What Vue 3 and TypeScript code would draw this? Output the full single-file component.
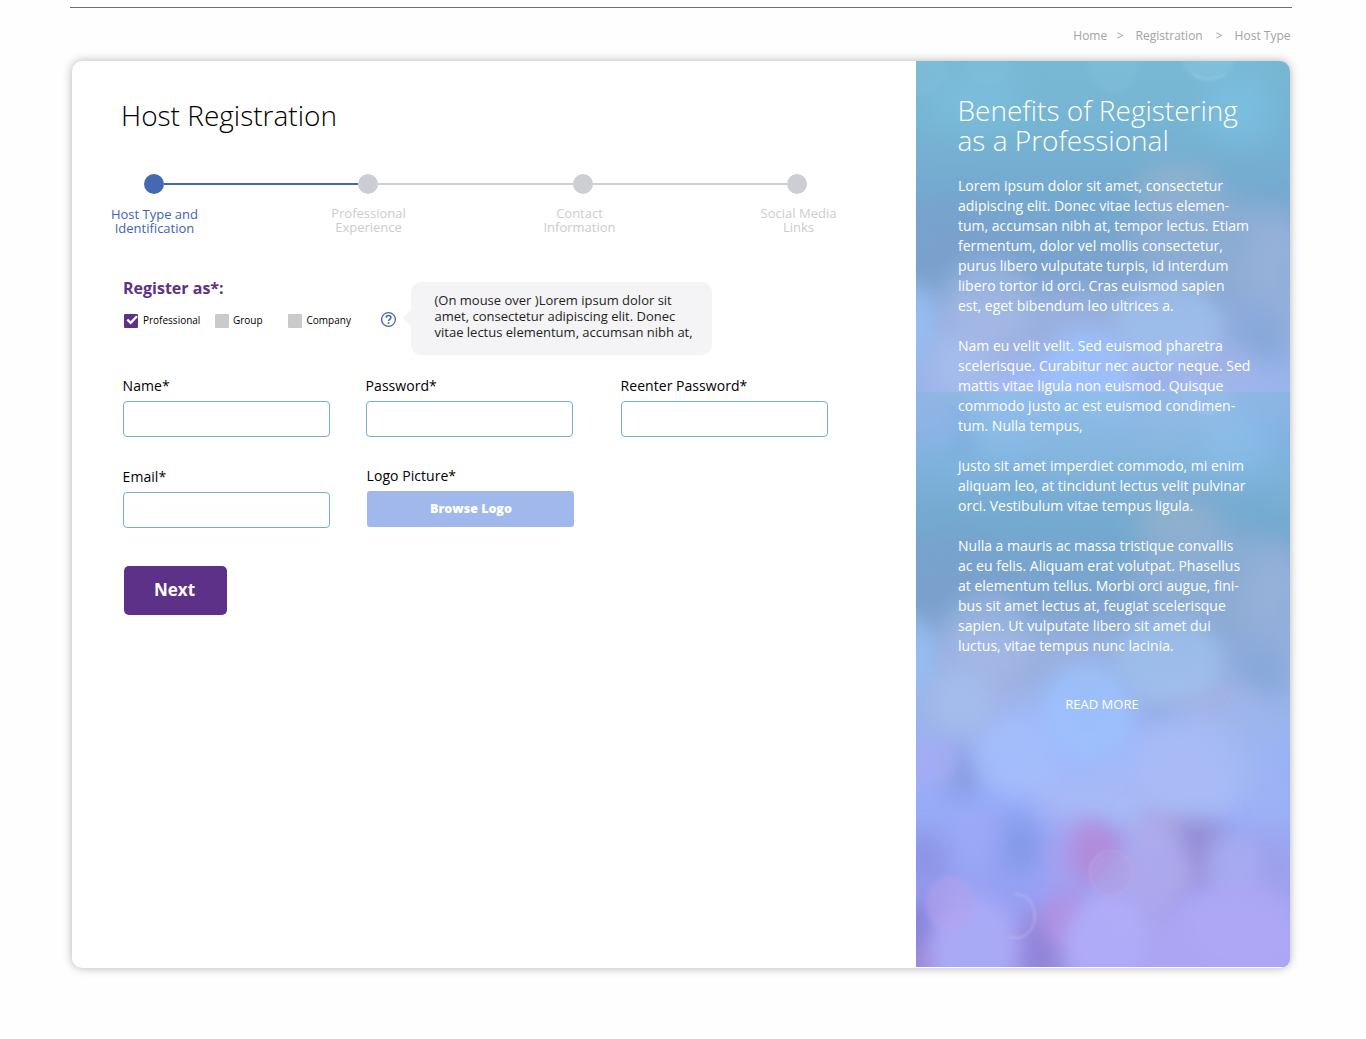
<script setup lang="ts">
import { ref } from 'vue'

interface Step {
  text: string
  active: boolean
}

interface Blob {
  x: number
  y: number
  rx: number
  ry: number
  fill: string
  o: number
}

const steps: Step[] = [
  { text: 'Host Type and\nIdentification', active: true },
  { text: 'Professional\nExperience', active: false },
  { text: 'Contact\nInformation', active: false },
  { text: 'Social Media\nLinks', active: false },
]

const hostTypes = ['Professional', 'Group', 'Company']
const selected = ref('Professional')

const heading = 'Benefits of Registering\nas a Professional'

const tip = [
  '(On mouse over )Lorem ipsum dolor sit',
  'amet, consectetur adipiscing elit. Donec',
  'vitae lectus elementum, accumsan nibh at,',
].join('\n')

const benefits: string[][] = [
  [
    'Lorem ipsum dolor sit amet, consectetur',
    'adipiscing elit. Donec vitae lectus elemen-',
    'tum, accumsan nibh at, tempor lectus. Etiam',
    'fermentum, dolor vel mollis consectetur,',
    'purus libero vulputate turpis, id interdum',
    'libero tortor id orci. Cras euismod sapien',
    'est, eget bibendum leo ultrices a.',
  ],
  [
    'Nam eu velit velit. Sed euismod pharetra',
    'scelerisque. Curabitur nec auctor neque. Sed',
    'mattis vitae ligula non euismod. Quisque',
    'commodo justo ac est euismod condimen-',
    'tum. Nulla tempus,',
  ],
  [
    'justo sit amet imperdiet commodo, mi enim',
    'aliquam leo, at tincidunt lectus velit pulvinar',
    'orci. Vestibulum vitae tempus ligula.',
  ],
  [
    'Nulla a mauris ac massa tristique convallis',
    'ac eu felis. Aliquam erat volutpat. Phasellus',
    'at elementum tellus. Morbi orci augue, fini-',
    'bus sit amet lectus at, feugiat scelerisque',
    'sapien. Ut vulputate libero sit amet dui',
    'luctus, vitae tempus nunc lacinia.',
  ],
]

// Wide, diffuse patches of colour behind the bokeh discs
const haze: Blob[] = [
  { x: 60, y: 38, rx: 50, ry: 32, fill: '#7cbddd', o: 0.8 },
  { x: 325, y: 48, rx: 38, ry: 34, fill: '#7bbfe2', o: 0.8 },
  { x: 372, y: 60, rx: 14, ry: 60, fill: '#74b2d2', o: 0.8 },
  { x: 262, y: 130, rx: 42, ry: 26, fill: '#9db4cd', o: 0.7 },
  { x: 300, y: 185, rx: 85, ry: 50, fill: '#93b0d6', o: 0.7 },
  { x: 365, y: 220, rx: 40, ry: 70, fill: '#9db3dd', o: 0.6 },
  { x: 40, y: 180, rx: 60, ry: 45, fill: '#7a9fcc', o: 0.5 },
  { x: 150, y: 262, rx: 60, ry: 28, fill: '#9fb4e0', o: 0.6 },
  { x: 62, y: 290, rx: 50, ry: 55, fill: '#a3b3e2', o: 0.8 },
  { x: 346, y: 275, rx: 26, ry: 30, fill: '#82a6d8', o: 0.8 },
  { x: 282, y: 308, rx: 60, ry: 22, fill: '#a3b3e4', o: 0.9 },
  { x: 240, y: 330, rx: 28, ry: 18, fill: '#8dabe6', o: 0.9 },
  { x: 217, y: 385, rx: 120, ry: 55, fill: '#a9bbf7', o: 0.9 },
  { x: 150, y: 345, rx: 80, ry: 40, fill: '#9fb9fb', o: 0.9 },
  { x: 60, y: 405, rx: 60, ry: 24, fill: '#97acf8', o: 0.8 },
  { x: 46, y: 380, rx: 18, ry: 22, fill: '#8096d8', o: 0.9 },
  { x: 350, y: 410, rx: 34, ry: 30, fill: '#9fb3f5', o: 0.8 },
  { x: 100, y: 455, rx: 26, ry: 34, fill: '#7f97e6', o: 0.9 },
  { x: 8, y: 465, rx: 26, ry: 28, fill: '#8a92e2', o: 0.9 },
  { x: 66, y: 450, rx: 24, ry: 30, fill: '#9fa8f9', o: 0.7 },
  { x: 110, y: 495, rx: 50, ry: 18, fill: '#96a3f6', o: 0.8 },
  { x: 255, y: 432, rx: 34, ry: 14, fill: '#aea3da', o: 1 },
  { x: 283, y: 458, rx: 30, ry: 36, fill: '#938cd4', o: 1 },
  { x: 264, y: 484, rx: 18, ry: 24, fill: '#b4a2e4', o: 0.8 },
  { x: 352, y: 476, rx: 20, ry: 40, fill: '#a0a0e8', o: 0.9 },
  { x: 150, y: 462, rx: 14, ry: 40, fill: '#ad9fec', o: 0.9 },
  { x: 122, y: 556, rx: 30, ry: 36, fill: '#9184d8', o: 1 },
  { x: 240, y: 528, rx: 24, ry: 44, fill: '#a398e0', o: 0.8 },
  { x: 6, y: 540, rx: 24, ry: 36, fill: '#8580d4', o: 1 },
]

const discs: Blob[] = [
  { x: 176, y: 458, rx: 22, ry: 34, fill: '#b48bdc', o: 0.9 },
  { x: 192, y: 458, rx: 22, ry: 26, fill: '#b28bda', o: 0.7 },
  { x: 150, y: 525, rx: 25, ry: 28, fill: '#b68fe0', o: 0.8 },
  { x: 10, y: 568, rx: 18, ry: 14, fill: '#ae82d4', o: 0.8 },
  { x: 72, y: 237, rx: 42, ry: 42, fill: '#a6bee8', o: 0.5 },
  { x: -4, y: 264, rx: 26, ry: 38, fill: '#96c0f4', o: 0.8 },
  { x: 252, y: 264, rx: 54, ry: 42, fill: '#a2c4f0', o: 0.65 },
  { x: 46, y: 305, rx: 32, ry: 32, fill: '#a4c0ef', o: 0.7 },
  { x: 171, y: 314, rx: 44, ry: 46, fill: '#9cc2fd', o: 0.75 },
  { x: 97, y: 362, rx: 40, ry: 40, fill: '#a6bffc', o: 0.7 },
  { x: 17, y: 368, rx: 24, ry: 24, fill: '#a8acf3', o: 0.6 },
  { x: 280, y: 370, rx: 52, ry: 50, fill: '#a9bdf8', o: 0.6 },
  { x: 332, y: 350, rx: 28, ry: 52, fill: '#9eb7ef', o: 0.4 },
  { x: 238, y: 470, rx: 32, ry: 44, fill: '#b0abee', o: 0.8 },
  { x: 316, y: 470, rx: 28, ry: 32, fill: '#abaef2', o: 0.75 },
  { x: 57, y: 554, rx: 46, ry: 52, fill: '#abacf8', o: 0.9 },
  { x: 214, y: 510, rx: 36, ry: 44, fill: '#aea8ee', o: 0.7 },
  { x: 192, y: 550, rx: 44, ry: 50, fill: '#b1adfa', o: 0.9 },
  { x: 330, y: 530, rx: 58, ry: 46, fill: '#ada8f4', o: 0.7 },
  { x: 308, y: 566, rx: 82, ry: 70, fill: '#afa8f6', o: 0.8 },
]

// Small discs whose rims are still readable
const rimmed: Blob[] = [
  { x: 4, y: 8, rx: 26, ry: 27, fill: '#86c3de', o: 0.25 },
  { x: 72, y: 2, rx: 22, ry: 22, fill: '#86c3de', o: 0.25 },
  { x: 197, y: 2, rx: 25, ry: 31, fill: '#86c3de', o: 0.28 },
  { x: 292, y: -5, rx: 26, ry: 25, fill: '#8fcbe4', o: 0.35 },
  { x: 35, y: 509, rx: 25, ry: 28, fill: '#b5a2ee', o: 0.5 },
  { x: 171, y: 308, rx: 36, ry: 36, fill: '#9cc2fd', o: 0.2 },
  { x: 17, y: 368, rx: 23, ry: 23, fill: '#a8acf6', o: 0.2 },
  { x: 195, y: 479, rx: 21, ry: 22, fill: '#b09fe4', o: 0.5 },
]
</script>

<template>
  <div class="page">
    <header class="top">
      <nav class="crumbs">
        <span>Home</span><span class="s1">&gt;</span>
        <span>Registration</span><span class="s2">&gt;</span>
        <span>Host Type</span>
      </nav>
    </header>

    <div class="card">
      <main class="main">
        <h1>Host Registration</h1>

        <div class="track">
          <template v-for="(s, i) in steps" :key="i">
            <span v-if="i > 0" class="bar" :class="{ on: steps[i - 1].active }"></span>
            <span class="dot" :class="{ on: s.active }"></span>
          </template>
        </div>
        <div class="labels">
          <div v-for="(s, i) in steps" :key="i" class="label" :class="['l' + i, { on: s.active }]">{{ s.text }}</div>
        </div>

        <div class="register">
          <div class="choose">
            <h2>Register as*:</h2>
            <div class="options">
              <label
                v-for="(t, i) in hostTypes"
                :key="t"
                class="option"
                :class="'o' + i"
                @click="selected = t"
              >
                <svg class="box" width="14" height="14" viewBox="0 0 14 14">
                  <rect width="14" height="14" rx="1" :fill="selected === t ? '#5e3189' : '#cacaca'" />
                  <path
                    v-if="selected === t"
                    d="M3.3 5.6 L6.7 8.8 L13 2.2"
                    fill="none"
                    stroke="#fff"
                    stroke-width="2.3"
                  />
                </svg>
                <span>{{ t }}</span>
              </label>
              <svg class="help" width="16" height="17" viewBox="0 0 16 17" fill="none" stroke="#4468b2">
                <circle cx="7.5" cy="8.5" r="6.9" stroke-width="1.3" />
                <path
                  d="M5.2 6.8 C5.2 3.7 9.9 3.7 9.9 6.5 C9.9 8.3 7.5 8.3 7.5 10.1"
                  stroke-width="1.6"
                />
                <path d="M7.5 11.3 V12.9" stroke-width="1.7" />
              </svg>
            </div>
          </div>
          <div class="tip">{{ tip }}</div>
        </div>

        <form class="fields" @submit.prevent>
          <div class="row">
            <div class="field"><label for="name">Name*</label><input id="name" type="text" /></div>
            <div class="field f2"><label for="pw">Password*</label><input id="pw" type="password" /></div>
            <div class="field f3"><label for="pw2">Reenter Password*</label><input id="pw2" type="password" /></div>
          </div>
          <div class="row second">
            <div class="field email"><label for="email">Email*</label><input id="email" type="text" /></div>
            <div class="field logo">
              <label>Logo Picture*</label><button type="button" class="browse">Browse Logo</button>
            </div>
          </div>
          <button type="submit" class="next">Next</button>
        </form>
      </main>

      <aside class="side">
        <svg class="art" width="374" height="906" viewBox="0 0 374 906">
          <defs>
            <linearGradient id="base" x1="0" y1="0" x2="0" y2="1">
              <stop offset="0" stop-color="#7ab9d4" />
              <stop offset="0.12" stop-color="#76b4d3" />
              <stop offset="0.25" stop-color="#74a8cf" />
              <stop offset="0.36" stop-color="#7ba3cd" />
              <stop offset="0.45" stop-color="#91acdc" />
              <stop offset="0.55" stop-color="#9bb5ea" />
              <stop offset="0.65" stop-color="#9bb1f6" />
              <stop offset="0.76" stop-color="#98a9f6" />
              <stop offset="0.86" stop-color="#9aa2f2" />
              <stop offset="1" stop-color="#a19aea" />
            </linearGradient>
            <linearGradient id="fade" gradientUnits="userSpaceOnUse" x1="0" y1="331" x2="0" y2="460">
              <stop offset="0" stop-color="#fff" stop-opacity="0.6" />
              <stop offset="1" stop-color="#fff" stop-opacity="0" />
            </linearGradient>
            <mask id="blend" maskUnits="userSpaceOnUse" x="0" y="0" width="374" height="906">
              <rect width="374" height="331" fill="#fff" />
              <rect y="331" width="374" height="140" fill="url(#fade)" />
            </mask>
            <filter id="wide" x="-150%" y="-200%" width="400%" height="500%">
              <feGaussianBlur stdDeviation="14" />
            </filter>
            <filter id="near" x="-100%" y="-120%" width="300%" height="340%">
              <feGaussianBlur stdDeviation="9.5" />
            </filter>
            <filter id="rim" x="-30%" y="-30%" width="160%" height="160%">
              <feGaussianBlur stdDeviation="2.6" />
            </filter>
            <filter id="thin"><feGaussianBlur stdDeviation="1" /></filter>
            <g id="bokeh">
              <rect y="-4" width="374" height="578" fill="url(#base)" />
              <ellipse
                v-for="(b, i) in haze"
                :key="'h' + i"
                :cx="b.x"
                :cy="b.y"
                :rx="b.rx"
                :ry="b.ry"
                :fill="b.fill"
                :opacity="b.o"
                filter="url(#wide)"
              />
              <ellipse
                v-for="(b, i) in discs"
                :key="'d' + i"
                :cx="b.x"
                :cy="b.y"
                :rx="b.rx"
                :ry="b.ry"
                :fill="b.fill"
                :opacity="b.o"
                filter="url(#near)"
              />
              <ellipse
                v-for="(b, i) in rimmed"
                :key="'r' + i"
                :cx="b.x"
                :cy="b.y"
                :rx="b.rx"
                :ry="b.ry"
                :fill="b.fill"
                :opacity="b.o"
                filter="url(#rim)"
              />
              <g fill="none" filter="url(#thin)">
                <ellipse cx="195" cy="478" rx="21" ry="22.5" stroke="#c3abea" stroke-opacity="0.5" stroke-width="1.6" />
                <path d="M99 499 A19 22 0 1 1 92 541" stroke="#bfb0f4" stroke-opacity="0.6" stroke-width="2" />
                <path d="M277 13 Q292 23 310 13" stroke="#95d0e8" stroke-opacity="0.5" stroke-width="2" />
              </g>
            </g>
          </defs>
          <use href="#bokeh" y="334" />
          <g mask="url(#blend)"><use href="#bokeh" /></g>
        </svg>
        <div class="copy">
          <h3>{{ heading }}</h3>
          <p v-for="(para, i) in benefits" :key="i">{{ para.join('\n') }}</p>
          <a class="more">READ MORE</a>
        </div>
      </aside>
    </div>
  </div>
</template>

<style>
body {
  margin: 0;
  background: #fefefe;
}
</style>

<style scoped>
.page {
  font-family: 'Open Sans', 'Noto Sans', sans-serif;
  width: 1366px;
  height: 1039px;
  box-sizing: border-box;
  padding-top: 7px;
  overflow: hidden;
  color: #000;
}
.top {
  width: 1222px;
  height: 53px;
  margin-left: 70px;
  border-top: 1px solid #6d6e70;
}
.crumbs {
  display: flex;
  justify-content: flex-end;
  padding: 19px 1.5px 0 0;
  font-size: 12px;
  line-height: 18px;
  color: #a3a3a3;
  white-space: nowrap;
}
.s1 { margin: 0 12px 0 9.5px; }
.s2 { margin: 0 12px 0 13px; }
.card {
  display: flex;
  width: 1218px;
  height: 907px;
  margin-left: 72px;
  border-radius: 10px;
  overflow: hidden;
  background: #fff;
  box-shadow: 0 0 10px rgba(0, 0, 0, 0.3);
}
.main {
  width: 844px;
  box-sizing: border-box;
  padding: 34px 0 0 49px;
}
h1 {
  margin: 0;
  height: 40px;
  font-size: 28px;
  line-height: 40px;
  font-weight: 300;
}
.track {
  display: flex;
  align-items: center;
  margin: 39px 0 0 23px;
}
.dot {
  width: 20px;
  height: 20px;
  border-radius: 50%;
  background: #cdced3;
}
.dot.on { background: #4468b2; }
.bar {
  width: 194.3px;
  height: 2px;
  background: #cfd0d1;
}
.bar.on { background: #4468b2; }
.labels {
  display: flex;
  margin: 12px 0 0 -16.5px;
  font-size: 13px;
  line-height: 14px;
  text-align: center;
  color: #cbccd0;
  white-space: pre;
}
.label { width: 100px; }
.label.on { color: #4164b0; padding-top: 1px; }
.l1 { margin-left: 114px; }
.l2 { margin-left: 111px; }
.l3 { margin-left: 119px; }
.register {
  display: flex;
  height: 73px;
  margin-top: 47px;
}
.choose { width: 288px; margin-left: 2px; }
h2 {
  margin: -6px 0 0;
  font-size: 16px;
  line-height: 24px;
  color: #5e3189;
  font-weight: 700;
}
.options {
  display: flex;
  margin-top: 10px;
  font-size: 10px;
  line-height: 20px;
  white-space: nowrap;
}
.option {
  display: flex;
  align-items: center;
}
.box { margin: 1px 5px 0 0; }
.o0 { width: 91px; margin-left: 1px; }
.o1 { width: 73px; }
.o2 { width: 92px; }
.o1 .box { margin-right: 4px; }
.o2 .box { margin-right: 4.5px; }
.help { margin: 1px 0 0 1px; flex: none; }
.tip {
  position: relative;
  width: 301px;
  box-sizing: border-box;
  padding: 10px 0 0 23.5px;
  border-radius: 10px;
  background: #f4f4f6;
  font-size: 13px;
  line-height: 16px;
  color: #231f20;
  white-space: pre;
}
.tip::before {
  content: '';
  position: absolute;
  left: -8px;
  top: 28px;
  border: 8px solid transparent;
  border-left-width: 0;
  border-right-color: #f4f4f6;
}
.fields { margin: 20px 0 0 2px; }
.row { display: flex; }
.second { height: 101px; margin-top: 28px; }
.field { width: 207px; }
.field label {
  display: block;
  height: 26px;
  margin-left: -0.4px;
  font-size: 14px;
  line-height: 22px;
  letter-spacing: 0.04px;
}
.field input {
  display: block;
  box-sizing: border-box;
  width: 207px;
  height: 36px;
  border: 1px solid #79adcd;
  border-radius: 4px;
  background: #fff;
  outline: none;
}
.f2 { margin-left: 36px; }
.f3 { margin-left: 48px; }
.email { padding-top: 1px; }
.logo { margin-left: 37px; }
.browse {
  display: block;
  width: 207px;
  height: 36px;
  padding: 0 0 0 1px;
  border: 0;
  border-radius: 3px;
  background: #a1b8ec;
  color: #fff;
  font: 800 12.5px/34px 'Open Sans', sans-serif;
}
.next {
  display: block;
  width: 103px;
  height: 49px;
  margin-left: 1px;
  padding: 0 2px 2px 0;
  border: 0;
  border-radius: 5px;
  background: #5e3189;
  color: #fff;
  font: 700 17px/45px 'Open Sans', sans-serif;
}
.side {
  position: relative;
  width: 374px;
  color: #fff;
}
.art {
  position: absolute;
  left: 0;
  top: 0;
}
.copy {
  position: relative;
  padding: 34px 0 0 42px;
  white-space: pre;
}
h3 {
  margin: 0 0 20px -0.5px;
  font-size: 28px;
  line-height: 30px;
  font-weight: 300;
}
p {
  margin: 0 0 20px;
  font-size: 14px;
  line-height: 20px;
  transform: translateY(0.5px);
}
.more {
  display: block;
  width: 288px;
  margin-top: 39px;
  text-align: center;
  font-size: 13px;
  line-height: 20px;
}
</style>
